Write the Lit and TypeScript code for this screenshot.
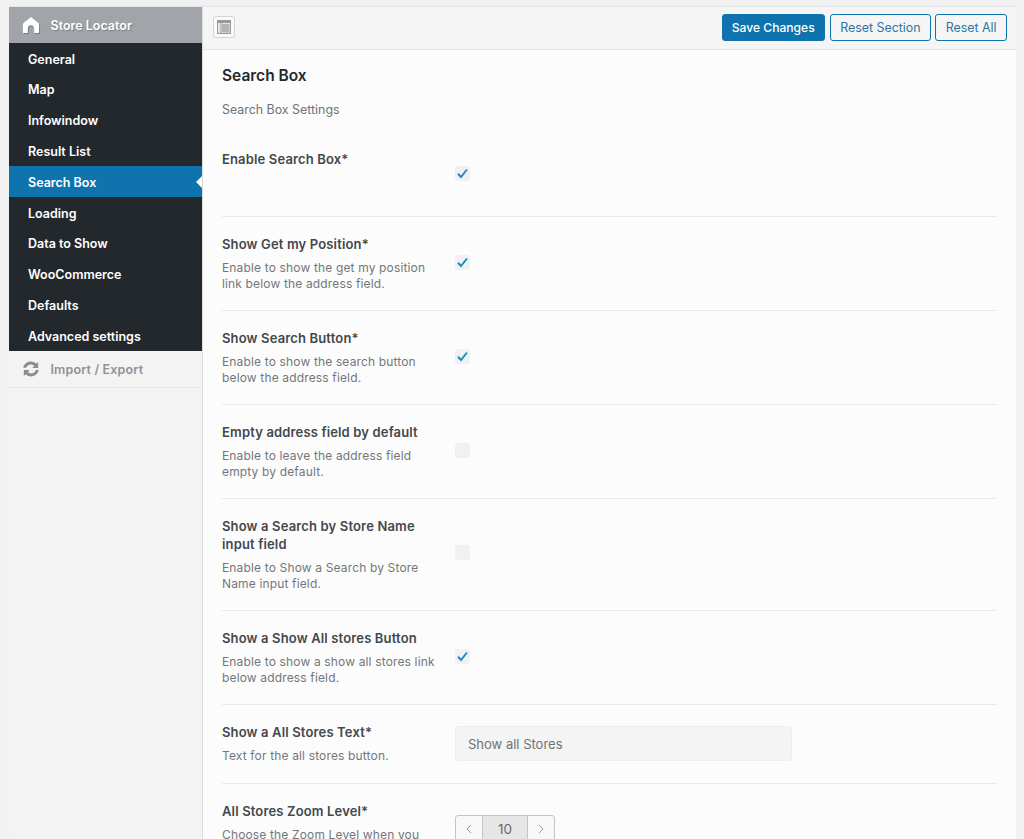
import { LitElement, html, css, svg } from 'lit';
import { customElement } from 'lit/decorators.js';

const menu = ['General', 'Map', 'Infowindow', 'Result List', 'Search Box', 'Loading', 'Data to Show', 'WooCommerce', 'Defaults', 'Advanced settings'];

type Row = {
  label: string[];
  desc: string[];
  control: 'on' | 'off' | 'text' | 'spin';
  cls: string;
};

const rows: Row[] = [
  { label: ['Enable Search Box*'], desc: [], control: 'on', cls: 'first' },
  { label: ['Show Get my Position*'], desc: ['Enable to show the get my position', 'link below the address field.'], control: 'on', cls: '' },
  { label: ['Show Search Button*'], desc: ['Enable to show the search button', 'below the address field.'], control: 'on', cls: '' },
  { label: ['Empty address field by default'], desc: ['Enable to leave the address field', 'empty by default.'], control: 'off', cls: '' },
  { label: ['Show a Search by Store Name', 'input field'], desc: ['Enable to Show a Search by Store', 'Name input field.'], control: 'off', cls: 'tall' },
  { label: ['Show a Show All stores Button'], desc: ['Enable to show a show all stores link', 'below address field.'], control: 'on', cls: '' },
  { label: ['Show a All Stores Text*'], desc: ['Text for the all stores button.'], control: 'text', cls: 'short' },
  { label: ['All Stores Zoom Level*'], desc: ['Choose the Zoom Level when you'], control: 'spin', cls: 'zoom' },
];

const homeIcon = svg`<path d="M10 1 L18 7.5 C18.6 8 19 8.8 19 9.6 V18 C19 18.6 18.6 19 18 19 H13.5 V13.5 C13.5 11.6 12 10.2 10 10.2 C8 10.2 6.5 11.6 6.5 13.5 V19 H2 C1.4 19 1 18.6 1 18 V9.6 C1 8.8 1.4 8 2 7.5 Z" fill="#fff"/>`;
const refreshIcon = svg`<path d="M1.4 8.6 C2.2 4.6 5.6 1.8 9.7 1.8 C12.1 1.8 14.2 2.8 15.8 4.3 L18 2.2 V8.8 H11.4 L13.6 6.6 C12.6 5.6 11.2 5 9.7 5 C7.4 5 5.4 6.4 4.6 8.6 Z M18.6 11.2 C17.8 15.4 14.4 18.2 10.3 18.2 C7.9 18.2 5.8 17.2 4.2 15.7 L2 17.8 V11.2 H8.6 L6.4 13.4 C7.4 14.4 8.8 15 10.3 15 C12.6 15 14.6 13.6 15.4 11.2 Z" fill="#8a8d90"/>`;

@customElement('app-root')
export class AppRoot extends LitElement {
  static styles = css`
    :host {
      display: block;
      height: 839px;
      overflow: hidden;
      background: #f1f1f1;
      font-family: Inter, 'Noto Sans', sans-serif;
      font-size: 12.5px;
      color: #3c4145;
    }
    .shell {
      display: flex;
      height: 833px;
      margin: 6px 8px 0 8.5px;
      border-top: 1px solid #e4e4e4;
    }
    .side {
      width: 193.5px;
      flex: none;
      background: #f3f3f3;
      border-right: 1px solid #dcdcdc;
    }
    .brand {
      display: flex;
      align-items: center;
      height: 36px;
      background: #a1a5a9;
      color: #fff;
      font-weight: 600;
      text-shadow: 1px 1px 1px rgba(0, 0, 0, 0.25);
    }
    .ico {
      width: 18px;
      height: 18px;
      margin: 0 10.5px 0 13.5px;
      flex: none;
    }
    .brand .ico {
      filter: drop-shadow(1px 1px 0 rgba(0, 0, 0, 0.25));
    }
    .menu {
      background: #23282d;
    }
    .item {
      position: relative;
      display: flex;
      align-items: center;
      box-sizing: border-box;
      height: 30.8px;
      padding: 1.6px 0 0 19.5px;
      color: #fff;
      font-weight: 600;
    }
    .item.active {
      background: #0f73ad;
    }
    .item.active::after {
      content: '';
      position: absolute;
      right: 0;
      top: 50%;
      margin-top: -6px;
      border: 6px solid transparent;
      border-right-color: #fcfcfc;
      border-left-width: 0;
    }
    .import {
      display: flex;
      align-items: center;
      box-sizing: border-box;
      height: 37px;
      padding-top: 1px;
      color: #8f9295;
      font-weight: 600;
      letter-spacing: 0.15px;
      border-bottom: 1px solid #e8e8e8;
    }
    .main {
      flex: 1;
      min-width: 0;
      background: #fcfcfc;
    }
    .bar {
      display: flex;
      align-items: center;
      justify-content: space-between;
      box-sizing: border-box;
      height: 43px;
      padding: 0 9px 2px 10px;
      background: #f5f5f5;
      border-bottom: 1px solid #e2e2e2;
    }
    .tool {
      display: flex;
      align-items: center;
      justify-content: center;
      width: 22px;
      height: 22px;
      box-sizing: border-box;
      border: 1px solid #d4d4d4;
      border-radius: 3px;
      background: #fafafa;
    }
    .actions {
      display: flex;
      gap: 4px;
    }
    .btn {
      display: flex;
      align-items: center;
      height: 27px;
      box-sizing: border-box;
      padding: 0 9.5px;
      border: 1px solid #0f73ad;
      border-radius: 3px;
      color: #2a76a5;
      background: #f5f5f5;
      font-size: 12.4px;
    }
    .btn.primary {
      margin-right: 1px;
      padding: 0 9px;
      background: #0f73ad;
      color: #fff;
      font-size: 12.1px;
      font-weight: 500;
    }
    .body {
      padding: 0 19px;
    }
    h2 {
      margin: 0;
      padding-top: 16px;
      font-size: 15.5px;
      line-height: 20px;
      font-weight: 600;
      color: #23282d;
    }
    .sub {
      margin-top: 15px;
      height: 17px;
      line-height: 17px;
      font-size: 12.4px;
      color: #6f7377;
    }
    .row {
      display: flex;
      padding: 18px 0;
      border-bottom: 1px solid #e9e9e9;
    }
    .row.first {
      height: 48px;
      padding-top: 32px;
    }
    .row.short {
      padding-bottom: 19px;
    }
    .row.zoom {
      border-bottom: 0;
    }
    .left {
      width: 233px;
      flex: none;
    }
    .label {
      font-size: 13px;
      line-height: 18px;
      letter-spacing: 0.15px;
      font-weight: 600;
      color: #43484c;
    }
    .desc {
      margin-top: 7px;
      font-size: 12px;
      line-height: 16px;
      letter-spacing: 0.15px;
      color: #73777b;
    }
    .check {
      display: flex;
      align-items: center;
      justify-content: center;
      width: 15px;
      height: 15px;
      margin-top: 20px;
      border-radius: 3px;
      background: #f1f1f1;
    }
    .first .check {
      margin-top: 16px;
    }
    .tall .check {
      margin-top: 28px;
    }
    .input {
      width: 337px;
      height: 35px;
      box-sizing: border-box;
      margin-top: 3px;
      margin-bottom: -3px;
      padding-left: 12px;
      display: flex;
      align-items: center;
      background: #f4f4f4;
      border: 1px solid #eeeeee;
      border-radius: 3px;
      font-size: 13px;
      color: #6f7377;
    }
    .spin {
      display: flex;
      width: 100px;
      height: 28px;
      box-sizing: border-box;
      margin-top: 12.5px;
      border: 1px solid #c5c5c5;
      border-radius: 3px;
      background: #f8f8f8;
      color: #9a9a9a;
    }
    .spin span {
      display: flex;
      align-items: center;
      justify-content: center;
      width: 27px;
    }
    .spin .val {
      width: 44px;
      background: #e6e6e6;
      border-left: 1px solid #c5c5c5;
      border-right: 1px solid #c5c5c5;
      color: #666;
      font-size: 13.5px;
    }
  `;

  private control(r: Row) {
    if (r.control === 'on') {
      return html`<div class="check">
        <svg width="13" height="13" viewBox="0 0 13 13"><path d="M2 6.8 L5 10 L11 2.5" fill="none" stroke="#1e8cbe" stroke-width="2"/></svg>
      </div>`;
    }
    if (r.control === 'off') {
      return html`<div class="check"></div>`;
    }
    if (r.control === 'text') {
      return html`<div class="input">Show all Stores</div>`;
    }
    return html`<div class="spin">
      <span><svg width="8" height="12" viewBox="0 0 8 12"><path d="M6 2 L2 6 L6 10" fill="none" stroke="#9a9a9a"/></svg></span>
      <span class="val">10</span>
      <span><svg width="8" height="12" viewBox="0 0 8 12"><path d="M2 2 L6 6 L2 10" fill="none" stroke="#9a9a9a"/></svg></span>
    </div>`;
  }

  render() {
    return html`
      <div class="shell">
        <div class="side">
          <div class="brand">
            <svg class="ico" viewBox="0 0 20 20">${homeIcon}</svg>
            Store Locator
          </div>
          <div class="menu">
            ${menu.map((m) => html`<div class="item ${m === 'Search Box' ? 'active' : ''}">${m}</div>`)}
          </div>
          <div class="import">
            <svg class="ico" viewBox="0 0 20 20">${refreshIcon}</svg>
            Import / Export
          </div>
        </div>
        <div class="main">
          <div class="bar">
            <div class="tool">
              <svg width="14" height="14" viewBox="0 0 14 14">
                <rect x="0.5" y="0.5" width="13" height="13" fill="#e6e6e6" stroke="#9a9a9a"/>
                <rect x="1" y="1" width="12" height="2" fill="#9a9a9a"/>
                <rect x="5" y="4" width="7.5" height="8.5" fill="#b4b4b4"/>
                <rect x="3.5" y="3" width="1" height="10" fill="#9a9a9a"/>
              </svg>
            </div>
            <div class="actions">
              <div class="btn primary">Save Changes</div>
              <div class="btn">Reset Section</div>
              <div class="btn">Reset All</div>
            </div>
          </div>
          <div class="body">
            <h2>Search Box</h2>
            <div class="sub">Search Box Settings</div>
            ${rows.map(
              (r) => html`<div class="row ${r.cls}">
                <div class="left">
                  <div class="label">${r.label.map((l) => html`<div>${l}</div>`)}</div>
                  ${r.desc.length ? html`<div class="desc">${r.desc.map((d) => html`<div>${d}</div>`)}</div>` : ''}
                </div>
                ${this.control(r)}
              </div>`
            )}
          </div>
        </div>
      </div>
    `;
  }
}
